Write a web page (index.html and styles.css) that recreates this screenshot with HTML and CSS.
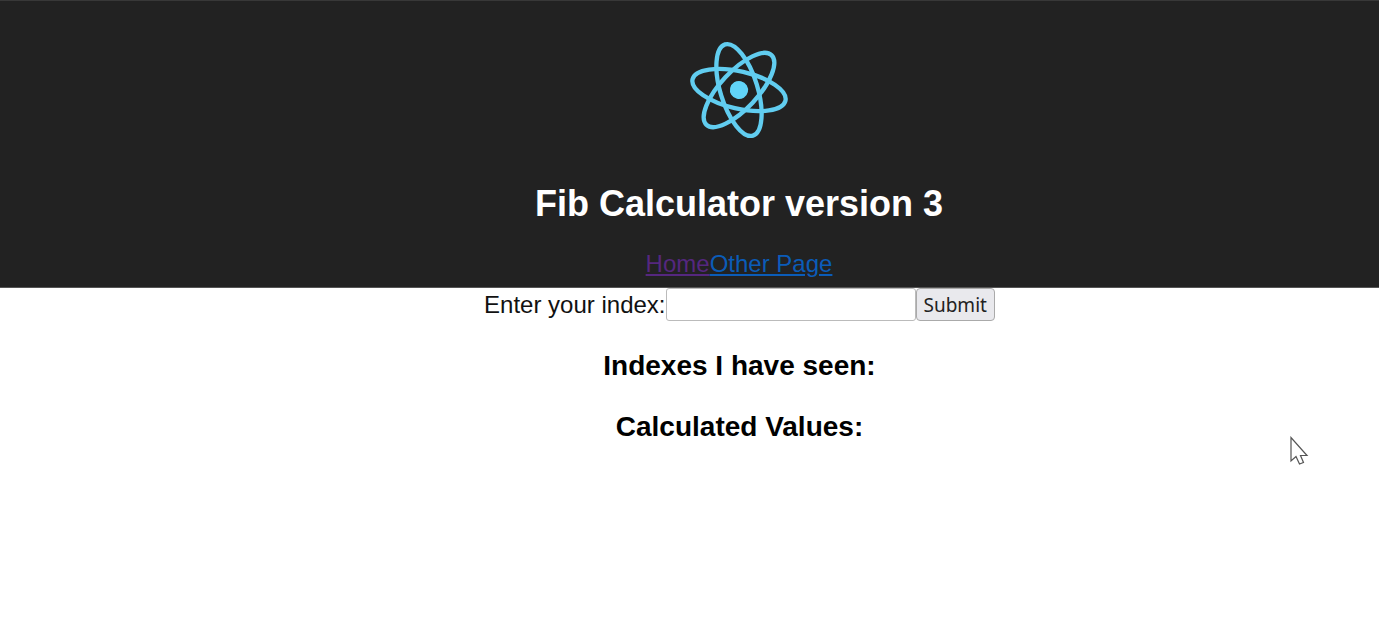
FILE: index.html
```html
<!DOCTYPE html>
<html lang="en">
<head>
<meta charset="utf-8">
<title>Fib Calculator</title>
<link rel="stylesheet" href="styles.css">
</head>
<body>
<div class="app">
  <header class="app-header">
    <svg class="app-logo" viewBox="-12 -12 24 24" role="img" aria-label="React logo">
      <g transform="rotate(13)">
        <circle r="2.1" fill="#61d4f8"/>
        <g fill="none" stroke="#61cdf0">
          <ellipse rx="11" ry="4.3"/>
          <ellipse rx="11" ry="4.3" transform="rotate(60)"/>
          <ellipse rx="11" ry="4.3" transform="rotate(120)"/>
        </g>
      </g>
    </svg>
    <h1 class="app-title">Fib Calculator version 3</h1>
    <nav class="app-nav"><a class="link link-visited" href="#home">Home</a><a class="link" href="#other">Other Page</a></nav>
  </header>
  <main class="content">
    <form class="fib-form">
      <label for="index">Enter your index:</label>
      <input class="index-input" id="index" type="text">
      <button class="submit" type="button">Submit</button>
    </form>
    <h3 class="section-title">Indexes I have seen:</h3>
    <h3 class="section-title">Calculated Values:</h3>
  </main>
</div>
<svg class="cursor" viewBox="0 0 20 30" aria-hidden="true">
  <path d="M2 1.500V25L7 20.500L10.500 28L14.500 26.500L11.500 19.500H18Z" fill="#fff" stroke="#555" stroke-width="1.2"/>
</svg>
</body>
</html>
```
FILE: styles.css
```css
body {
  margin: 0;
  background: #fff;
  color: #111;
  font: 24px/28px "Liberation Sans", Arial, sans-serif;
}

.app {
  margin-right: 5px;
  text-align: center;
}

.app-header {
  display: flex;
  flex-direction: column;
  align-items: center;
  padding: 37px 0 9px 99px;
  border-top: 1px solid #383838;
  border-bottom: 1px solid #555;
  background: #222;
  color: #fff;
}

.app-logo {
  width: 104px;
  height: 104px;
}

.app-title {
  margin: 40px 0 24px;
  font-size: 36px;
  line-height: 44px;
}

.app-nav {
  display: flex;
}

.link {
  color: #0b5cb8;
  text-decoration: underline;
}

.link-visited {
  color: #55277f;
}

.content {
  padding-left: 100px;
}

.fib-form {
  display: flex;
  justify-content: center;
  align-items: center;
}

.index-input {
  box-sizing: border-box;
  width: 250px;
  height: 33px;
  padding: 2px 4px;
  border: 1px solid #bbb;
  border-radius: 3px;
  background: #fff;
  font: 20px "Noto Sans", sans-serif;
}

.submit {
  box-sizing: border-box;
  height: 33px;
  padding: 0 7px;
  border: 1px solid #aaa;
  border-radius: 4px;
  background: #e9e9ed;
  color: #222;
  font: 19px "Noto Sans", sans-serif;
}

.section-title {
  margin: 28px 0;
  color: #000;
  font-size: 28px;
  line-height: 33px;
}

.cursor {
  position: absolute;
  top: 436px;
  left: 1289px;
  width: 20px;
  height: 30px;
}
```
